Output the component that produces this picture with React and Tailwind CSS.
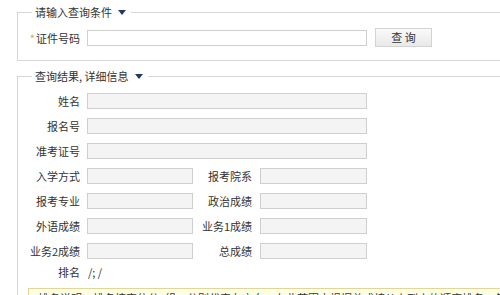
import React from "react";

function Arrow() {
  return (
    <svg width="8" height="5" viewBox="0 0 8 5" className="ml-[6px] block">
      <path d="M0 0 L8 0 L4 5 Z" fill="#1f3a66" />
    </svg>
  );
}

function Field({ w, white }) {
  return (
    <div
      className={`h-[16px] border border-[#cfcfcf] ${white ? "bg-white" : "bg-[#f4f4f4]"}`}
      style={{ width: w }}
    />
  );
}

function Row({ label, mt }) {
  return (
    <div className={`flex h-[16px] items-center ${mt}`}>
      <div className="w-[62px] text-right">{label}</div>
      <div className="ml-[7px]">
        <Field w="280px" />
      </div>
    </div>
  );
}

function Row2({ a, b, mt }) {
  return (
    <div className={`flex h-[16px] items-center ${mt}`}>
      <div className="w-[62px] text-right">{a}</div>
      <div className="ml-[7px] h-[16px] w-[106px] border border-[#cfcfcf] bg-[#f4f4f4]" />
      <div className="w-[59px] text-right">{b}</div>
      <div className="ml-[8px] h-[16px] w-[107px] border border-[#cfcfcf] bg-[#f4f4f4]" />
    </div>
  );
}

export default function App() {
  return (
    <div className="h-[295px] w-[500px] overflow-hidden bg-white font-['Noto_Sans_CJK_SC',sans-serif] text-[11px] leading-[14px] text-[#333]">
      <fieldset className="ml-[17px] mt-[5px] border-b border-l border-t border-[#d6d6d6] pb-[13px] pt-[9px]">
        <legend className="ml-[14px] pl-[3px] pr-[5px] leading-[14px]">
          <span className="flex items-center">
            <span>请输入查询条件</span>
            <Arrow />
          </span>
        </legend>
        <div className="flex h-[19px] items-center">
          <div className="w-[62px] text-right">
            <span className="mr-[1px] text-[#e8a33d]">*</span>证件号码
          </div>
          <div className="ml-[7px]">
            <Field w="280px" white />
          </div>
          <button className="ml-[8px] h-[19px] w-[57px] border border-[#d3d3d3] bg-gradient-to-b from-[#fafafa] to-[#e9e9e9] text-[11px] leading-[17px] text-[#333]">
            查 询
          </button>
        </div>
      </fieldset>

      <fieldset className="ml-[17px] mt-[8px] border-l border-t border-[#d6d6d6] pt-[10px]">
        <legend className="ml-[14px] pl-[3px] pr-[5px] leading-[14px]">
          <span className="flex items-center">
            <span>查询结果, 详细信息</span>
            <Arrow />
          </span>
        </legend>
        <div className="flex flex-col">
          <Row label="姓名" mt="" />
          <Row label="报名号" mt="mt-[9px]" />
          <Row label="准考证号" mt="mt-[9px]" />
          <Row2 a="入学方式" b="报考院系" mt="mt-[9px]" />
          <Row2 a="报考专业" b="政治成绩" mt="mt-[9px]" />
          <Row2 a="外语成绩" b="业务1成绩" mt="mt-[9px]" />
          <Row2 a="业务2成绩" b="总成绩" mt="mt-[9px]" />
          <div className="mt-[5px] flex h-[16px] items-center">
            <div className="w-[62px] text-right">排名</div>
            <div className="ml-[8px]">/; /</div>
          </div>
          <div className="ml-[10px] mt-[8px] h-[30px] border border-[#e2d598] bg-[#ffffe3] pl-[9px] pt-[2px] whitespace-nowrap">
            排名说明：排名按定位分3组，分别代表在方向，在此范围内根据总成绩从上到小的顺序排名，每组的第
          </div>
        </div>
      </fieldset>
    </div>
  );
}
